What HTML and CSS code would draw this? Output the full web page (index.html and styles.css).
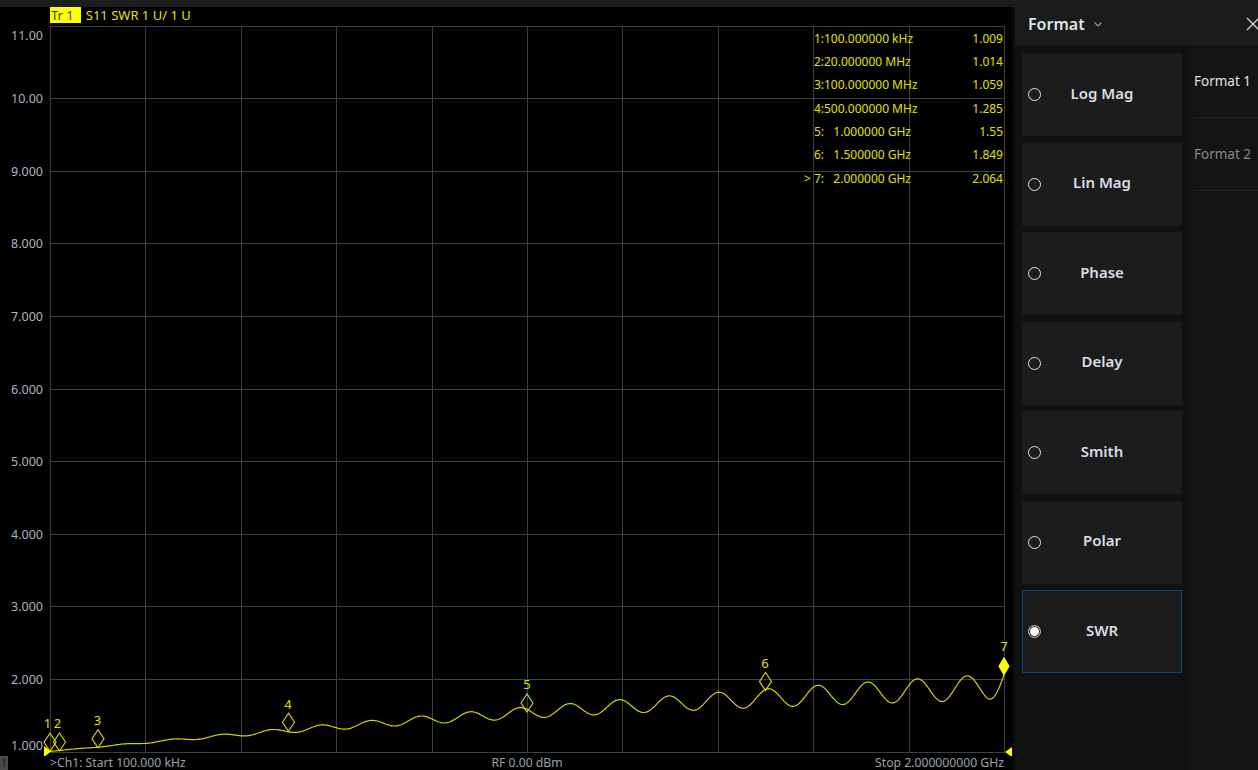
FILE: index.html
```html
<!DOCTYPE html>
<html lang="en">
<head>
    <meta charset="UTF-8">
    <title>S11 SWR - Format</title>
    <link rel="stylesheet" href="styles.css">
</head>
<body>
    <div class="topbar"></div>
    <main class="app">
        <section class="scope">
            <div class="trace-title">
                <span class="tr-tag">Tr 1</span>
                <span>S11 SWR 1 U/ 1 U</span>
            </div>
            <div class="plot">
                <svg class="chart" width="1012" height="730" viewBox="0 26 1012 730">
                    <g class="grid">
                        <line x1="50.5" y1="26" x2="50.5" y2="753"/>
                        <line x1="145.5" y1="26" x2="145.5" y2="753"/>
                        <line x1="241.5" y1="26" x2="241.5" y2="753"/>
                        <line x1="336.5" y1="26" x2="336.5" y2="753"/>
                        <line x1="432.5" y1="26" x2="432.5" y2="753"/>
                        <line x1="527.5" y1="26" x2="527.5" y2="753"/>
                        <line x1="622.5" y1="26" x2="622.5" y2="753"/>
                        <line x1="718.5" y1="26" x2="718.5" y2="753"/>
                        <line x1="813.5" y1="26" x2="813.5" y2="753"/>
                        <line x1="909.5" y1="26" x2="909.5" y2="753"/>
                        <line x1="1004.5" y1="26" x2="1004.5" y2="753"/>
                        <line x1="50" y1="26.5" x2="1005" y2="26.5"/>
                        <line x1="50" y1="98.5" x2="1005" y2="98.5"/>
                        <line x1="50" y1="171.5" x2="1005" y2="171.5"/>
                        <line x1="50" y1="243.5" x2="1005" y2="243.5"/>
                        <line x1="50" y1="316.5" x2="1005" y2="316.5"/>
                        <line x1="50" y1="389.5" x2="1005" y2="389.5"/>
                        <line x1="50" y1="461.5" x2="1005" y2="461.5"/>
                        <line x1="50" y1="534.5" x2="1005" y2="534.5"/>
                        <line x1="50" y1="606.5" x2="1005" y2="606.5"/>
                        <line x1="50" y1="679.5" x2="1005" y2="679.5"/>
                        <line x1="50" y1="752.5" x2="1005" y2="752.5"/>
                    </g>
                    <g class="ylab">
                        <text x="43" y="39.5">11.00</text>
                        <text x="43" y="103">10.00</text>
                        <text x="43" y="175.7">9.000</text>
                        <text x="43" y="248.3">8.000</text>
                        <text x="43" y="321">7.000</text>
                        <text x="43" y="393.5">6.000</text>
                        <text x="43" y="466">5.000</text>
                        <text x="43" y="538.7">4.000</text>
                        <text x="43" y="611.3">3.000</text>
                        <text x="43" y="684">2.000</text>
                        <text x="43" y="749.5">1.000</text>
                    </g>
                    <polyline id="trace" class="trace" points=""/>
                    <g class="mk">
                        <path d="M50 751.3 L56 742.3 L50 733.3 L44 742.3 Z"/>
                        <path d="M59.5 751 L65.5 742 L59.5 733 L53.5 742 Z"/>
                        <path d="M98 747.7 L104 738.7 L98 729.7 L92 738.7 Z"/>
                        <path d="M288.5 731.3 L294.5 722.3 L288.5 713.3 L282.5 722.3 Z"/>
                        <path d="M527 712 L533 703 L527 694 L521 703 Z"/>
                        <path d="M765.5 690.4 L771.5 681.4 L765.5 672.4 L759.5 681.4 Z"/>
                        <path class="mk-active" d="M1004 674.8 L1009 666.3 L1004 657.8 L999 666.3 Z"/>
                    </g>
                    <g class="mk-lab">
                        <text x="47.5" y="728">1</text>
                        <text x="57.5" y="728">2</text>
                        <text x="97.5" y="724.5">3</text>
                        <text x="288" y="708.5">4</text>
                        <text x="527" y="689">5</text>
                        <text x="765" y="667.5">6</text>
                        <text x="1004" y="651">7</text>
                    </g>
                    <polygon class="edge" points="44,746 51,751.5 44,757"/>
                    <polygon class="edge" points="1012,747 1005,752 1012,757"/>
                </svg>
                <div class="markers">
                    <span class="mk-id">1:</span><span>100.000000 kHz</span><span class="mk-val">1.009</span>
                    <span class="mk-id">2:</span><span>20.000000 MHz</span><span class="mk-val">1.014</span>
                    <span class="mk-id">3:</span><span>100.000000 MHz</span><span class="mk-val">1.059</span>
                    <span class="mk-id">4:</span><span>500.000000 MHz</span><span class="mk-val">1.285</span>
                    <span class="mk-id">5:</span><span>   1.000000 GHz</span><span class="mk-val">1.55</span>
                    <span class="mk-id">6:</span><span>   1.500000 GHz</span><span class="mk-val">1.849</span>
                    <span class="mk-id">&gt; 7:</span><span>   2.000000 GHz</span><span class="mk-val">2.064</span>
                </div>
            </div>
            <div class="status">
                <span class="ch-box">1</span>
                <span>&gt;Ch1: Start 100.000 kHz</span>
                <span>RF 0.00 dBm</span>
                <span class="stop">Stop 2.000000000 GHz</span>
            </div>
        </section>
        <div class="splitter"></div>
        <aside class="panel">
            <header class="panel-head">
                <span class="panel-title">Format</span>
                <svg class="chevron" width="8" height="5" viewBox="0 0 8 5"><polyline points="0.5,0.5 4,4 7.5,0.5"/></svg>
                <svg class="close" width="14" height="14" viewBox="0 0 14 14"><path d="M1 1 L13 13 M13 1 L1 13"/></svg>
            </header>
            <div class="panel-body">
                <div class="format-list">
                    <button class="fmt-btn"><span class="radio"></span><span class="fmt-label">Log Mag</span></button>
                    <button class="fmt-btn"><span class="radio"></span><span class="fmt-label">Lin Mag</span></button>
                    <button class="fmt-btn"><span class="radio"></span><span class="fmt-label">Phase</span></button>
                    <button class="fmt-btn"><span class="radio"></span><span class="fmt-label">Delay</span></button>
                    <button class="fmt-btn"><span class="radio"></span><span class="fmt-label">Smith</span></button>
                    <button class="fmt-btn"><span class="radio"></span><span class="fmt-label">Polar</span></button>
                    <button class="fmt-btn active"><span class="radio on"></span><span class="fmt-label">SWR</span></button>
                </div>
                <nav class="tabs">
                    <div class="tab current">Format 1</div>
                    <div class="tab">Format 2</div>
                </nav>
            </div>
        </aside>
    </main>
    <script src="trace.js"></script>
</body>
</html>
```

FILE: styles.css
```css
body { margin: 0; background: #000; font-family: "Noto Sans", "Open Sans", sans-serif; overflow: hidden; }
.topbar { height: 7px; background: #1c1c1c; }
.app { display: flex; height: 763px; }

/* trace window */
.scope { width: 1012px; display: flex; flex-direction: column; background: #000; }
.trace-title { height: 19px; display: flex; align-items: flex-start; gap: 5px; padding-left: 50px; font-size: 13px; line-height: 16px; color: #e2e200; }
.tr-tag { background: #ffff00; color: #3c3c3c; padding: 0 7px 0 1px; }
.plot { position: relative; height: 730px; }
.chart { display: block; }
.grid line { stroke: #3e3e3e; stroke-width: 1; shape-rendering: crispEdges; }
.ylab text { fill: #a8b3c3; font-size: 12.5px; text-anchor: end; }
.trace { fill: none; stroke: #d2d200; stroke-width: 1.2; stroke-linejoin: round; }
.mk path { fill: none; stroke: #e0e000; stroke-width: 1.1; }
.mk path.mk-active { fill: #ffff00; stroke: #ffff00; }
.mk-lab text { fill: #e0e000; font-size: 13px; text-anchor: middle; }
.edge { fill: #ffff00; }
.markers { position: absolute; top: 0.5px; right: 9px; display: grid; grid-template-columns: 27px 100px 79px; grid-auto-rows: 23.33px; align-items: center; font-size: 12px; color: #e0e000; white-space: pre; }
.mk-id, .mk-val { text-align: right; }
.status { height: 14px; display: grid; grid-template-columns: 50px 1fr auto 1fr; padding-right: 8px; font-size: 12.2px; line-height: 14px; color: #98a1ac; }
.ch-box { width: 8px; height: 14px; background: #4a4a4a; color: #222; font-size: 10px; text-align: center; overflow: hidden; }
.stop { text-align: right; }

/* format panel */
.splitter { width: 3px; background: #0b0b0b; }
.panel { flex: 1; display: flex; flex-direction: column; background: #111; overflow: hidden; }
.panel-head { height: 38px; box-sizing: border-box; display: flex; align-items: center; padding: 0 0 4px 13px; background: #1b1b1b; }
.panel-title { font-size: 16px; font-weight: 600; color: #dfe4ec; }
.chevron { margin-left: 9px; fill: none; stroke: #9a9a9a; stroke-width: 1.2; }
.close { margin-left: auto; margin-right: -2px; fill: none; stroke: #cfcfcf; stroke-width: 1.4; }
.panel-body { flex: 1; display: flex; }
.format-list { width: 160px; display: flex; flex-direction: column; gap: 6.5px; padding: 8px 0 0 7px; }
.fmt-btn { height: 83px; box-sizing: border-box; display: grid; grid-template-columns: 13px 1fr 13px; align-items: center; padding: 0 5px; margin: 0; background: #1c1c1c; border: 1px solid transparent; border-radius: 0; font-family: "Noto Sans", "Open Sans", sans-serif; font-size: 15px; font-weight: 600; color: #d8dde6; cursor: pointer; }
.fmt-btn.active { border-color: #12407f; }
.fmt-label { text-align: center; padding-bottom: 4px; }
.radio { width: 13px; height: 13px; box-sizing: border-box; border: 1.6px solid #e6e6e6; border-radius: 50%; }
.radio.on { border-color: #a8a8a8; background: #fff; box-shadow: inset 0 0 0 1px #1c1c1c; }
.tabs { flex: 1; display: flex; flex-direction: column; margin-left: 6px; background: #141414; }
.tab { height: 72px; display: flex; align-items: center; margin-left: 6px; border-bottom: 1px solid #242424; font-size: 13.5px; color: #868a90; }
.tab.current { color: #dde2ea; }
```

FILE: trace.js
```js
(function () {
    var trace = document.getElementById('trace');
    var pts = [];
    for (var x = 50; x <= 1004; x += 1) {
        var t = (x - 50) / 954;
        var v = 1.009 + 1.24 * t - 0.35 * t * t;
        v += 0.18 * Math.pow(t, 1.2) * Math.cos(2 * Math.PI * (x - 470) / 49.7);
        if (t > 0.983) v += Math.pow((t - 0.983) / 0.017, 1.5) * 0.17;
        pts.push(x + ',' + (752 - (v - 1) * 72.6).toFixed(1));
    }
    trace.setAttribute('points', pts.join(' '));
})();
```
